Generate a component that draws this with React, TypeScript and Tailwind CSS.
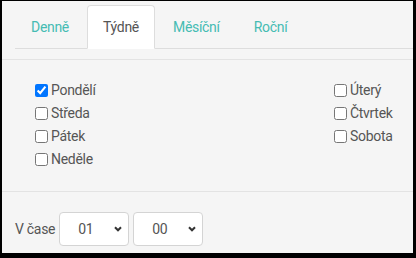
import { useState } from "react"

const tabs = ["Denně", "Týdně", "Měsíční", "Roční"]

const leftDays = ["Pondělí", "Středa", "Pátek", "Neděle"]
const rightDays = ["Úterý", "Čtvrtek", "Sobota"]

function DayCheck({ label, checked, onToggle }: { label: string; checked: boolean; onToggle: () => void }) {
  return (
    <label className="flex h-[23px] items-center gap-[3px] text-[14px] text-[#555]">
      <input type="checkbox" checked={checked} onChange={onToggle} className="m-0 h-[13px] w-[13px]" />
      <span>{label}</span>
    </label>
  )
}

function TimeSelect({ value, options }: { value: string; options: string[] }) {
  return (
    <div className="relative w-[70px]">
      <select
        defaultValue={value}
        className="h-[34px] w-full appearance-none rounded-[4px] border border-[#d4d4d4] bg-white pl-[18px] text-[14px] text-[#555] outline-none"
      >
        {options.map((o) => (
          <option key={o}>{o}</option>
        ))}
      </select>
      <svg
        className="pointer-events-none absolute right-[7px] top-[14px]"
        width="8"
        height="6"
        viewBox="0 0 8 6"
        fill="none"
      >
        <path d="M1 1.2 4 4.3 7 1.2" stroke="#333" strokeWidth="2" />
      </svg>
    </div>
  )
}

export default function App() {
  const [active] = useState(1)
  const [checked, setChecked] = useState<Record<string, boolean>>({ Pondělí: true })
  const toggle = (d: string) => setChecked((c) => ({ ...c, [d]: !c[d] }))
  const hours = Array.from({ length: 24 }, (_, i) => String(i).padStart(2, "0"))
  const minutes = ["00", "15", "30", "45"]

  return (
    <div className="h-[258px] w-[416px] bg-black pl-[2px] pt-[1px] font-['Roboto',sans-serif] tracking-[-0.3px]">
      <div className="flex h-[252px] w-[411px] flex-col bg-[#f5f5f5]">
        <div className="pl-[13px] pt-[4px]">
          <ul className="flex border-b border-[#dddddd]">
            {tabs.map((t, i) => (
              <li key={t} className="-mb-px mr-[2px]">
                <a
                  className={
                    i === active
                      ? "flex h-[44px] items-center rounded-t-[4px] border border-[#dddddd] border-b-white bg-white px-[15px] text-[14px] text-[#555]"
                      : "flex h-[44px] items-center border border-transparent px-[15px] text-[14px] text-[#45bcb3]"
                  }
                >
                  {t}
                </a>
              </li>
            ))}
          </ul>
        </div>
        <div className="mt-[10px] border-b border-[#e3e3e3]" />
        <div className="flex justify-between pb-[20px] pl-[33px] pr-[21px] pt-[19px]">
          <div className="flex flex-col">
            {leftDays.map((d) => (
              <DayCheck key={d} label={d} checked={!!checked[d]} onToggle={() => toggle(d)} />
            ))}
          </div>
          <div className="flex w-[58px] flex-col">
            {rightDays.map((d) => (
              <DayCheck key={d} label={d} checked={!!checked[d]} onToggle={() => toggle(d)} />
            ))}
          </div>
        </div>
        <div className="flex items-center gap-[4px] border-t border-[#e3e3e3] pl-[13px] pt-[20px]">
          <span className="text-[14px] text-[#555]">V čase</span>
          <TimeSelect value="01" options={hours} />
          <TimeSelect value="00" options={minutes} />
        </div>
      </div>
    </div>
  )
}
